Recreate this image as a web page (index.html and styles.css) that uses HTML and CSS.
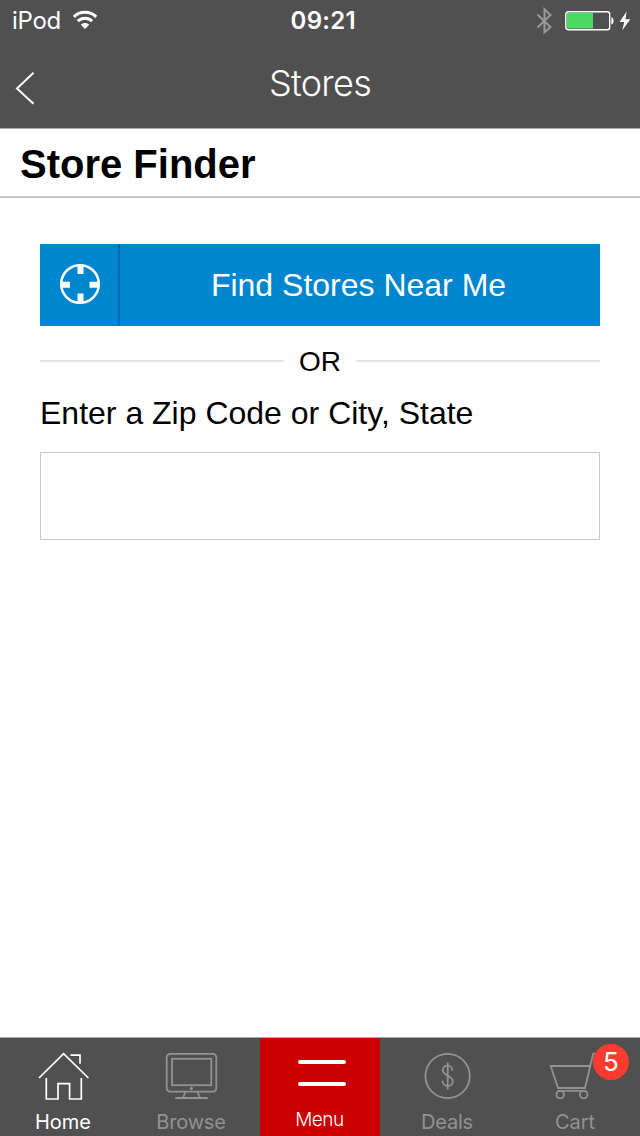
FILE: index.html
```html
<!DOCTYPE html>
<html lang="en">
<head>
<meta charset="utf-8">
<title>Stores</title>
<link rel="stylesheet" href="styles.css">
</head>
<body>
<div class="screen">
  <header class="header">
    <div class="status">
      <div class="status-left">
        <span class="carrier">iPod</span>
        <svg class="wifi" width="26" height="20" viewBox="0 0 26 20" fill="none" stroke="#fff" stroke-width="3">
          <path d="M1.8 6.8C8 .8 18 .8 24.2 6.8"/>
          <path d="M5.8 11.1c4.1-3.9 10.3-3.9 14.4 0"/>
          <path d="M13 19l-4.2-4.3c2.4-2.3 6-2.3 8.4 0z" fill="#fff" stroke="none"/>
        </svg>
      </div>
      <span class="time">09:21</span>
      <div class="status-right">
        <svg width="18" height="28" viewBox="0 0 18 28" fill="none" stroke="#999" stroke-width="2"><path d="M1.5 7.5l13 12.5-6 5.2V2.3l6 5.7L1.5 20.5"/></svg>
        <svg class="battery" width="50" height="20" viewBox="0 0 50 20">
          <rect x=".8" y=".8" width="43.9" height="17.9" rx="2.5" fill="none" stroke="#fff" stroke-width="1.4"/>
          <rect x="2" y="2" width="26" height="15.5" fill="#4cd964"/>
          <path d="M46.3 6.2c3 .8 3 6.5 0 7.3z" fill="#fff"/>
        </svg>
        <svg class="bolt" width="12" height="20" viewBox="0 0 12 20" fill="#fff"><path d="M7.6.5L.6 11h4.6l-2 8.5 8-11.2H6.5z"/></svg>
      </div>
    </div>
    <div class="nav">
      <svg class="back" width="24" height="36" viewBox="0 0 24 36" fill="none" stroke="#fff" stroke-width="2"><path d="M21.5 2.8L5 18.4l16.5 15.4"/></svg>
      <span class="nav-title">Stores</span>
    </div>
  </header>
  <h1 class="page-title">Store Finder</h1>
  <main class="content">
    <button class="find">
      <span class="find-icon">
        <svg width="42" height="42" viewBox="0 0 42 42" fill="none" stroke="#fff">
          <circle cx="21" cy="21" r="18.8" stroke-width="2.5"/>
          <path d="M21.5 2v9M21.5 30.5V40M2 21.8h9M30.5 21.8H40" stroke-width="6"/>
        </svg>
      </span>
      <span class="find-label">Find Stores Near Me</span>
    </button>
    <div class="divider"><span class="divider-text">OR</span></div>
    <label class="zip-label" for="zip">Enter a Zip Code or City, State</label>
    <input class="zip" id="zip" type="text">
  </main>
  <nav class="tabs">
    <div class="tab active">
      <svg width="56" height="54" viewBox="0 0 56 54" fill="none" stroke="currentColor" stroke-width="1.7"><path d="M3 28L27.6 3.7 52.4 28M34.5 5.2H44v8.5M10.3 28v21H22V33.7h11.6V49h11.7V28"/></svg>
      <span class="tab-label home-label">Home</span>
    </div>
    <div class="tab">
      <svg width="56" height="54" viewBox="0 0 56 54" fill="none" stroke="currentColor" stroke-width="1.8"><rect x="2.7" y="3.8" width="49.6" height="37.8" rx="3.5"/><rect x="8" y="8.8" width="39.3" height="26.4"/><path d="M21.5 42l-2.6 6M33.5 42l2.6 6M11.3 48h32.5"/><circle cx="27.4" cy="38.4" r="1.6" fill="currentColor" stroke="none"/></svg>
      <span class="tab-label browse-label">Browse</span>
    </div>
    <div class="tab menu">
      <svg width="56" height="52" viewBox="0 0 56 52" fill="none" stroke="#fff" stroke-width="4" stroke-linecap="round"><path d="M8 12h44M8 34h44"/></svg>
      <span class="tab-label menu-label">Menu</span>
    </div>
    <div class="tab">
      <svg width="56" height="54" viewBox="0 0 56 54" fill="none" stroke="currentColor" stroke-width="1.8"><circle cx="27.6" cy="26" r="22.2"/><path d="M27.7 12.5v27M32.3 20.5c0-6.3-9.5-6.3-9.5-.5 0 6.5 10 5 10 11.5 0 6-10.3 6-10.3-.7"/></svg>
      <span class="tab-label deals-label">Deals</span>
    </div>
    <div class="tab">
      <svg width="56" height="54" viewBox="0 0 56 54" fill="none" stroke="currentColor" stroke-width="1.8"><path d="M47 3.7h-1.8L37 38H10L2.7 16h38.8M9.5 40.8h28.8"/><circle cx="12.2" cy="44.6" r="3.8"/><circle cx="35.7" cy="44.6" r="3.8"/></svg>
      <span class="tab-label cart-label">Cart</span>
      <span class="badge">5</span>
    </div>
  </nav>
</div>
</body>
</html>
```
FILE: styles.css
```css
* { box-sizing: border-box; }
body { margin: 0; background: #fff; font-family: "Liberation Sans", Arial, sans-serif; color: #000; }
.screen { display: flex; flex-direction: column; width: 640px; height: 1136px; overflow: hidden; }

.header { height: 129px; background: #505050; border-bottom: 1px solid #aaa; color: #fff; font-family: Inter, sans-serif; }
.status { display: grid; grid-template-columns: 1fr auto 1fr; align-items: center; height: 40px; padding: 1px 9.5px 0 12px; }
.status-left { display: flex; align-items: center; gap: 11px; }
.carrier { font-size: 24px; line-height: 38px; letter-spacing: -.3px; }
.wifi { margin-bottom: 2px; }
.time { padding-left: 4px; font-size: 24px; line-height: 38px; font-weight: 600; letter-spacing: .3px; }
.status-right { display: flex; align-items: center; justify-content: flex-end; }
.battery { margin-left: 11px; }
.bolt { margin-left: 4px; }
.nav { display: grid; grid-template-columns: 60px 1fr 60px; height: 88px; }
.back { margin: 30px 0 0 11.5px; }
.nav-title { text-align: center; font-size: 36px; line-height: 87px; font-weight: 300; letter-spacing: -.7px; }

.page-title { margin: 0; height: 69px; padding: 0 20px; border-bottom: 2px solid #c8c8c8; font-size: 40px; line-height: 70px; font-weight: 700; }
.content { flex: 1; padding: 46px 40px 0; }
.find { display: flex; width: 560px; height: 82px; padding: 0; border: 0; background: #0085cf; color: #fff; font: 32px "Liberation Sans", Arial, sans-serif; }
.find-icon { display: flex; align-items: center; justify-content: center; width: 80px; height: 82px; padding: 0 0 2px 2px; border-right: 2px solid #0065b8; }
.find-label { flex: 1; padding-right: 3px; line-height: 82px; text-align: center; }
.divider { display: flex; align-items: center; height: 70px; }
.divider::before, .divider::after { content: ""; flex: 1; height: 2px; background: #e5e5e5; }
.divider-text { width: 72px; padding-top: 2px; text-align: center; font-size: 28px; line-height: 68px; }
.zip-label { display: block; height: 56px; font-size: 32px; line-height: 34px; }
.zip { display: block; width: 560px; height: 88px; border: 1px solid #c8c8c8; background: #fff; padding: 0 16px; font-size: 32px; }

.tabs { display: grid; grid-template-columns: repeat(5, 128px); height: 99px; border-top: 1px solid #aaa; background: #505050; color: #929292; font-family: Inter, sans-serif; }
.tab { position: relative; display: flex; flex-direction: column; align-items: center; padding-top: 12px; }
.tab svg { flex-shrink: 0; }
.active, .menu { color: #fff; }
.menu { width: 120px; height: 98px; margin: 0 auto; background: #c00; }
.tab-label { font-size: 20px; line-height: 36px; letter-spacing: 0; margin-left: -2px; }
.browse-label, .deals-label { letter-spacing: -.2px; }
.menu-label { height: 34px; margin-left: -1px; font-size: 19px; font-weight: 300; letter-spacing: -.5px; }
.badge { position: absolute; left: 81px; top: 6px; width: 36px; height: 36px; border-radius: 50%; background: #ff3b30; color: #fff; font-size: 26px; line-height: 36px; text-align: center; }
```
